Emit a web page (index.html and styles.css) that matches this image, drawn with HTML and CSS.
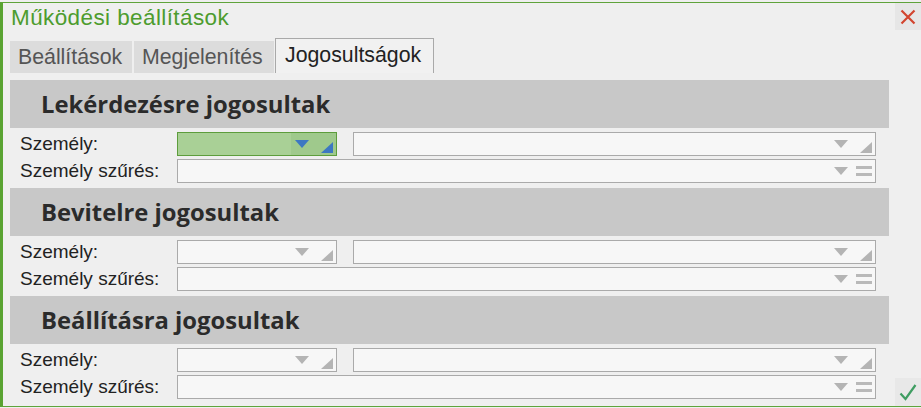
FILE: index.html
```html
<!DOCTYPE html>
<html lang="hu">
<head>
<meta charset="utf-8">
<title>Működési beállítások</title>
<link rel="stylesheet" href="styles.css">
</head>
<body>
<div class="frame">
  <div class="titlebar">
    <span class="title">Működési beállítások</span>
    <button class="close" aria-label="Bezárás">
      <svg width="16" height="16" viewBox="0 0 16 16"><path d="M1.5 1.5 L14.5 14.5 M14.5 1.5 L1.5 14.5" stroke="#d2452f" stroke-width="2.2" fill="none"/></svg>
    </button>
  </div>
  <div class="tabs">
    <div class="tab">Beállítások</div>
    <div class="tab">Megjelenítés</div>
    <div class="tab active">Jogosultságok</div>
  </div>
  <div class="body">
    <div class="groups">
      <section class="group">
        <div class="group-head">Lekérdezésre jogosultak</div>
        <div class="row">
          <span class="label">Személy:</span>
          <div class="combo short focused"><span class="btns"><span class="arrow"></span><span class="corner"></span></span></div>
          <div class="combo long"><span class="btns"><span class="arrow"></span><span class="corner"></span></span></div>
        </div>
        <div class="row">
          <span class="label">Személy szűrés:</span>
          <div class="combo full"><span class="btns"><span class="arrow"></span><span class="eq"></span></span></div>
        </div>
      </section>
      <section class="group">
        <div class="group-head">Bevitelre jogosultak</div>
        <div class="row">
          <span class="label">Személy:</span>
          <div class="combo short"><span class="btns"><span class="arrow"></span><span class="corner"></span></span></div>
          <div class="combo long"><span class="btns"><span class="arrow"></span><span class="corner"></span></span></div>
        </div>
        <div class="row">
          <span class="label">Személy szűrés:</span>
          <div class="combo full"><span class="btns"><span class="arrow"></span><span class="eq"></span></span></div>
        </div>
      </section>
      <section class="group">
        <div class="group-head">Beállításra jogosultak</div>
        <div class="row">
          <span class="label">Személy:</span>
          <div class="combo short"><span class="btns"><span class="arrow"></span><span class="corner"></span></span></div>
          <div class="combo long"><span class="btns"><span class="arrow"></span><span class="corner"></span></span></div>
        </div>
        <div class="row">
          <span class="label">Személy szűrés:</span>
          <div class="combo full"><span class="btns"><span class="arrow"></span><span class="eq"></span></span></div>
        </div>
      </section>
    </div>
    <div class="side">
      <button class="ok" aria-label="OK">
        <svg width="20" height="20" viewBox="0 0 20 20"><path d="M2.5 11.5 L7.5 17 L17.5 3" stroke="#3f9d62" stroke-width="2.2" fill="none"/></svg>
      </button>
    </div>
  </div>
</div>
</body>
</html>
```
FILE: styles.css
```css
* { box-sizing: border-box; }
html, body { margin: 0; padding: 0; }
body {
  background: #efefef;
  width: 921px;
  height: 408px;
  overflow: hidden;
  font-family: "Liberation Sans", Arial, sans-serif;
  padding-top: 2px;
}
.frame {
  height: 405px;
  border-top: 1px solid #5fa33b;
  border-left: 3px solid #5aa332;
  border-bottom: 1px solid #5fa33b;
  background: #efefef;
  display: flex;
  flex-direction: column;
}
.titlebar {
  height: 35px;
  display: flex;
  align-items: flex-start;
  justify-content: space-between;
  padding-left: 8px;
}
.title {
  color: #4d9c2e;
  font-size: 22.5px;
  letter-spacing: 0.4px;
  line-height: 28px;
  margin-top: 1px;
  white-space: nowrap;
}
.close {
  width: 26px;
  height: 27px;
  border: none;
  background: #e6e6e6;
  padding: 0;
  display: flex;
  align-items: center;
  justify-content: center;
}
.tabs {
  display: flex;
  align-items: flex-end;
  gap: 2px;
  padding-left: 7px;
  height: 35px;
}
.tab {
  height: 32px;
  background: #dcdcdc;
  color: #555;
  font-size: 21.3px;
  line-height: 32px;
  padding: 0 8px;
  white-space: nowrap;
}
.tab:nth-child(1) { width: 122px; }
.tab:nth-child(2) { width: 140px; }
.tab.active {
  width: 159px;
  height: 35px;
  line-height: 33px;
  background: #f1f1f1;
  border: 1px solid #a9a9a9;
  border-bottom: none;
  color: #222;
  padding: 0 9px;
  margin-left: -1px;
}
.body {
  flex: 1;
  display: flex;
  padding-top: 7px;
  padding-left: 7px;
}
.groups {
  width: 879px;
  display: flex;
  flex-direction: column;
}
.group {
  display: flex;
  flex-direction: column;
  padding-bottom: 5px;
}
.group-head {
  height: 48px;
  background: #c8c8c8;
  color: #2b2b2b;
  font-family: "Open Sans", "Noto Sans", sans-serif;
  font-weight: 700;
  font-size: 23.8px;
  line-height: 48px;
  padding-left: 31px;
  margin-bottom: 4px;
  white-space: nowrap;
}
.row {
  display: flex;
  align-items: center;
  height: 24px;
  margin-bottom: 3px;
}
.row:last-child { margin-bottom: 0; }
.label {
  width: 167px;
  padding-left: 10px;
  font-size: 19px;
  color: #222;
  white-space: nowrap;
}
.combo {
  height: 24px;
  background: #f7f7f7;
  border: 1px solid #aaaaaa;
  display: flex;
  justify-content: flex-end;
  align-items: center;
}
.combo.short { width: 160px; }
.combo.long { width: 523px; margin-left: 16px; }
.combo.full { width: 699px; }
.combo.focused {
  background: #a9d096;
  border-color: #5d9d3c;
}
.btns {
  display: flex;
  align-items: center;
  height: 100%;
  padding-left: 4px;
  padding-right: 3px;
}
.combo.focused .btns { background: #9fc98c; }
.arrow {
  width: 0;
  height: 0;
  border-left: 7px solid transparent;
  border-right: 7px solid transparent;
  border-top: 8px solid #b4b4b4;
  margin-right: 12px;
}
.corner {
  width: 0;
  height: 0;
  border-left: 12px solid transparent;
  border-bottom: 11px solid #b4b4b4;
  margin-top: 6px;
}
.focused .arrow { border-top-color: #3d78c2; }
.focused .corner { border-bottom-color: #3d78c2; }
.eq {
  width: 16px;
  height: 10px;
  border-top: 3px solid #b9b9b9;
  border-bottom: 3px solid #b9b9b9;
  margin-left: -4px;
}
.side {
  flex: 1;
  display: flex;
  align-items: flex-end;
  justify-content: flex-end;
}
.ok {
  width: 26px;
  height: 28px;
  border: none;
  background: #e8e8e8;
  padding: 0;
  display: flex;
  align-items: center;
  justify-content: center;
}
```
